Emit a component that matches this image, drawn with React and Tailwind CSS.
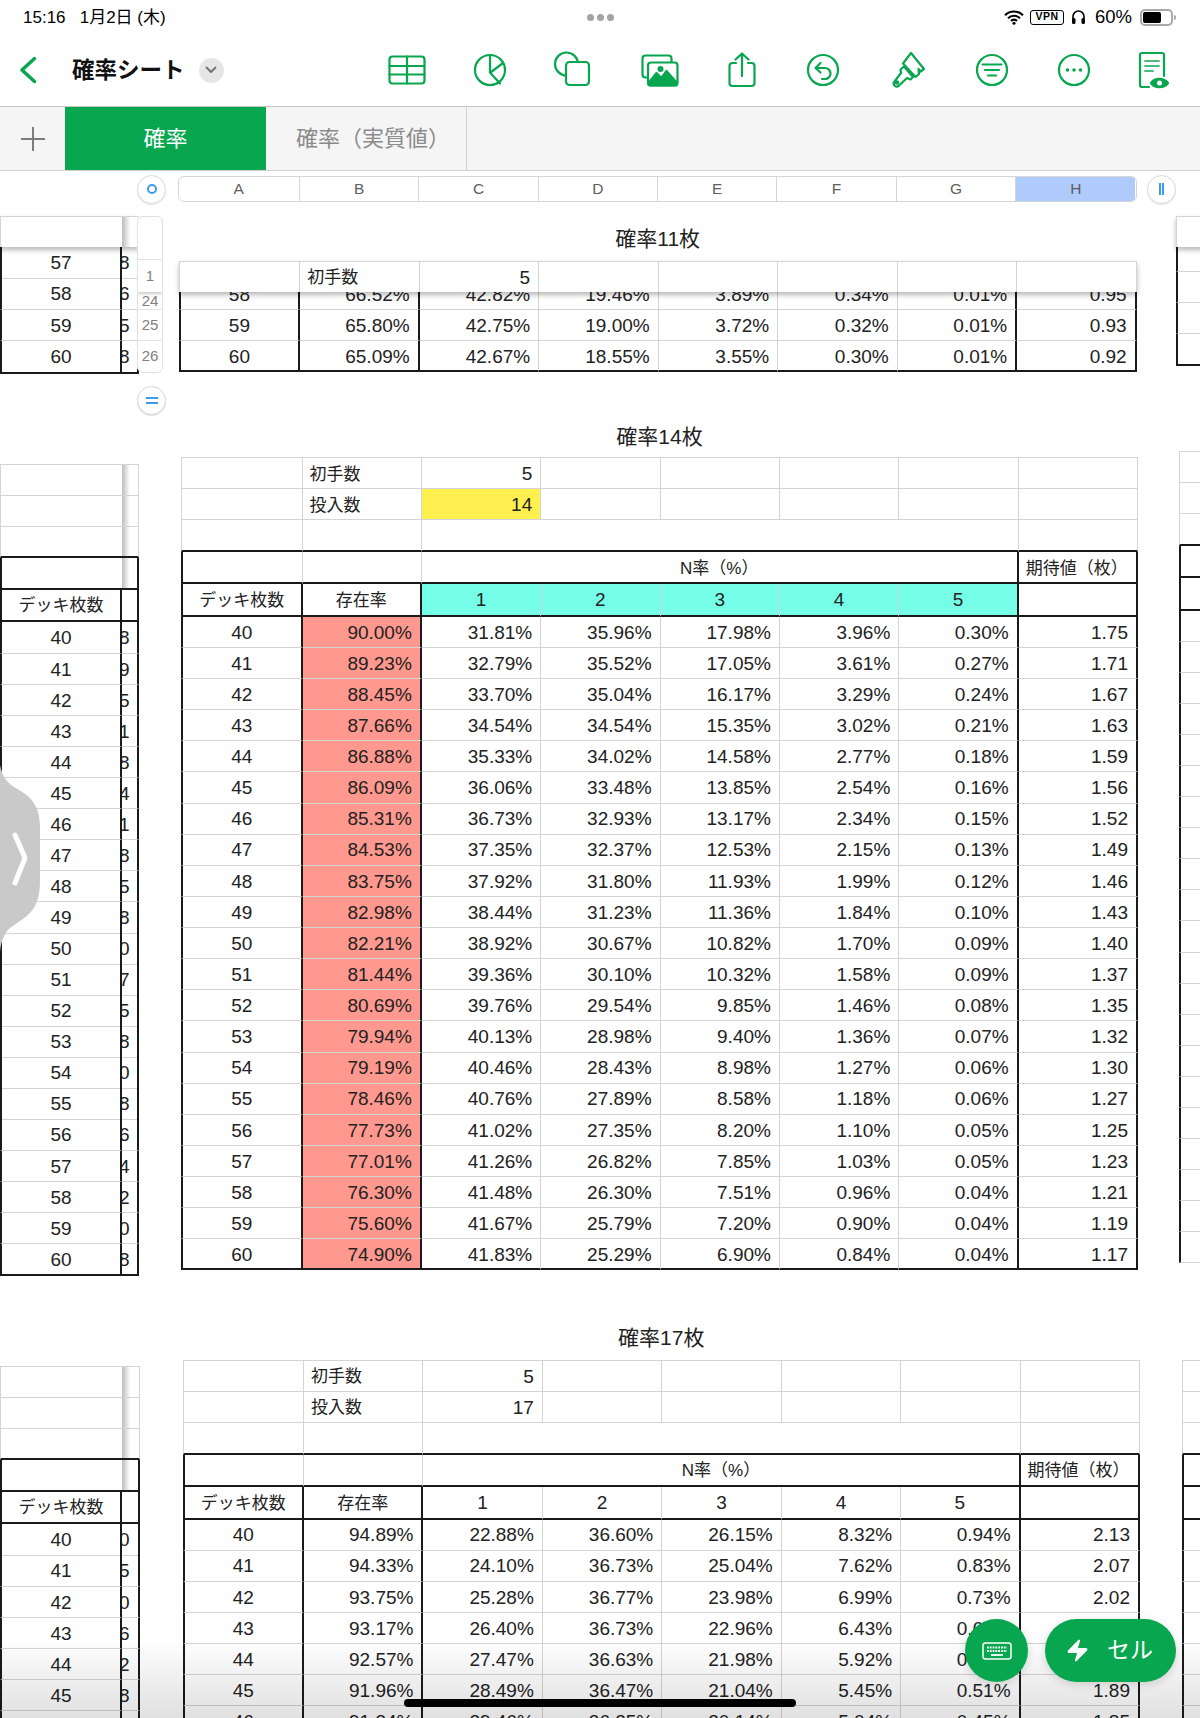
import React from "react";
import { Zap } from "lucide-react";

const G = "#07a64f";
const COLS = "grid-cols-[121.5px_repeat(7,1fr)]";

const T1 = [
  "58 66.52% 42.82% 19.46% 3.89% 0.34% 0.01% 0.95",
  "59 65.80% 42.75% 19.00% 3.72% 0.32% 0.01% 0.93",
  "60 65.09% 42.67% 18.55% 3.55% 0.30% 0.01% 0.92",
];
const T2 = `40 90.00% 31.81% 35.96% 17.98% 3.96% 0.30% 1.75
41 89.23% 32.79% 35.52% 17.05% 3.61% 0.27% 1.71
42 88.45% 33.70% 35.04% 16.17% 3.29% 0.24% 1.67
43 87.66% 34.54% 34.54% 15.35% 3.02% 0.21% 1.63
44 86.88% 35.33% 34.02% 14.58% 2.77% 0.18% 1.59
45 86.09% 36.06% 33.48% 13.85% 2.54% 0.16% 1.56
46 85.31% 36.73% 32.93% 13.17% 2.34% 0.15% 1.52
47 84.53% 37.35% 32.37% 12.53% 2.15% 0.13% 1.49
48 83.75% 37.92% 31.80% 11.93% 1.99% 0.12% 1.46
49 82.98% 38.44% 31.23% 11.36% 1.84% 0.10% 1.43
50 82.21% 38.92% 30.67% 10.82% 1.70% 0.09% 1.40
51 81.44% 39.36% 30.10% 10.32% 1.58% 0.09% 1.37
52 80.69% 39.76% 29.54% 9.85% 1.46% 0.08% 1.35
53 79.94% 40.13% 28.98% 9.40% 1.36% 0.07% 1.32
54 79.19% 40.46% 28.43% 8.98% 1.27% 0.06% 1.30
55 78.46% 40.76% 27.89% 8.58% 1.18% 0.06% 1.27
56 77.73% 41.02% 27.35% 8.20% 1.10% 0.05% 1.25
57 77.01% 41.26% 26.82% 7.85% 1.03% 0.05% 1.23
58 76.30% 41.48% 26.30% 7.51% 0.96% 0.04% 1.21
59 75.60% 41.67% 25.79% 7.20% 0.90% 0.04% 1.19
60 74.90% 41.83% 25.29% 6.90% 0.84% 0.04% 1.17`.split("\n");
const T3 = `40 94.89% 22.88% 36.60% 26.15% 8.32% 0.94% 2.13
41 94.33% 24.10% 36.73% 25.04% 7.62% 0.83% 2.07
42 93.75% 25.28% 36.77% 23.98% 6.99% 0.73% 2.02
43 93.17% 26.40% 36.73% 22.96% 6.43% 0.65% 1.97
44 92.57% 27.47% 36.63% 21.98% 5.92% 0.58% 1.93
45 91.96% 28.49% 36.47% 21.04% 5.45% 0.51% 1.89
46 91.34% 29.46% 36.25% 20.14% 5.04% 0.45% 1.85`.split("\n");

function Cell({ children, a = "r", r, b, l, bg = "", span = "", sm }) {
  return (
    <div
      className={`flex min-w-0 items-center overflow-hidden pt-[2px] ${
        a === "r" ? "justify-end pr-2" : a === "c" ? "justify-center" : "justify-start pl-[7px]"
      } ${r ? "border-r-2 border-r-[#1a1a1a]" : "border-r border-r-[#d4d4d4]"} ${
        b ? "border-b-2 border-b-[#1a1a1a]" : "border-b border-b-[#d4d4d4]"
      } ${l === "k" ? "border-l-2 border-l-[#1a1a1a]" : l === "g" ? "border-l border-l-[#d4d4d4]" : ""} ${bg} ${span} ${
        sm ? "text-[17px]" : "text-[19px]"
      }`}
    >
      {children}
    </div>
  );
}

function DataRow({ text, last, salmon }) {
  const c = text.split(" ");
  return (
    <div className={`grid h-[31.14px] ${COLS}`}>
      <Cell a="c" l="k" r b={last}>{c[0]}</Cell>
      <Cell r b={last} bg={salmon ? "bg-[#ff988e]" : ""}>{c[1]}</Cell>
      <Cell b={last}>{c[2]}</Cell>
      <Cell b={last}>{c[3]}</Cell>
      <Cell b={last}>{c[4]}</Cell>
      <Cell b={last}>{c[5]}</Cell>
      <Cell r b={last}>{c[6]}</Cell>
      <Cell r b={last}>{c[7]}</Cell>
    </div>
  );
}

function FullTable({ count, highlight, rows, cut }) {
  const cy = highlight ? "bg-[#76ffe8]" : "";
  return (
    <div className="w-full border-t border-t-[#d4d4d4]">
      <div className={`grid h-[31px] ${COLS}`}>
        <Cell l="g" />
        <Cell a="l" sm>初手数</Cell>
        <Cell>5</Cell>
        <Cell /><Cell /><Cell /><Cell /><Cell />
      </div>
      <div className={`grid h-[31px] ${COLS}`}>
        <Cell l="g" />
        <Cell a="l" sm>投入数</Cell>
        <Cell bg={highlight ? "bg-[#fff050]" : ""}>{count}</Cell>
        <Cell /><Cell /><Cell /><Cell /><Cell />
      </div>
      <div className={`grid h-[32px] ${COLS}`}>
        <Cell l="g" b />
        <Cell b />
        <Cell b span="col-span-5" />
        <Cell b />
      </div>
      <div className={`grid h-[32px] ${COLS}`}>
        <Cell l="k" b />
        <Cell b />
        <Cell a="c" r b sm span="col-span-5">N率（%）</Cell>
        <Cell a="l" r b sm>期待値（枚）</Cell>
      </div>
      <div className={`grid h-[32.5px] ${COLS}`}>
        <Cell a="c" l="k" r b sm>デッキ枚数</Cell>
        <Cell a="c" r b sm>存在率</Cell>
        <Cell a="c" b bg={cy}>1</Cell>
        <Cell a="c" b bg={cy}>2</Cell>
        <Cell a="c" b bg={cy}>3</Cell>
        <Cell a="c" b bg={cy}>4</Cell>
        <Cell a="c" r b bg={cy}>5</Cell>
        <Cell r b />
      </div>
      {rows.map((t, i) => (
        <DataRow key={i} text={t} salmon={highlight} last={!cut && i === rows.length - 1} />
      ))}
    </div>
  );
}

function LeftRow({ n, d, last, tall }) {
  return (
    <div className={`grid grid-cols-[122px_1fr] ${tall ? "h-[31.4px]" : "h-[31.07px]"}`}>
      <div
        className={`flex items-center justify-center border-l-2 border-l-[#1a1a1a] border-r-2 border-r-[#1a1a1a] pt-[2px] text-[19px] ${
          last ? "border-b-2 border-b-[#1a1a1a]" : "border-b border-b-[#d4d4d4]"
        }`}
      >
        {n}
      </div>
      <div
        className={`flex items-center overflow-hidden border-r-2 border-r-[#1a1a1a] pt-[2px] text-[19px] ${
          last ? "border-b-2 border-b-[#1a1a1a]" : "border-b border-b-[#d4d4d4]"
        }`}
      >
        <span className="-ml-[3px]">{d}</span>
      </div>
    </div>
  );
}

function LeftTop() {
  return (
    <div className="border-t border-t-[#d4d4d4]">
      {[0, 1, 2].map((i) => (
        <div key={i} className="grid h-[31px] grid-cols-[122px_1fr]">
          <div className={`border-l border-l-[#d4d4d4] ${i === 2 ? "border-b-2 border-b-[#1a1a1a]" : "border-b border-b-[#d4d4d4]"}`} />
          <div className={`border-r border-r-[#d4d4d4] bg-[linear-gradient(90deg,#bdbdbd,#ffffff_50%)] ${i === 2 ? "border-b-2 border-b-[#1a1a1a]" : "border-b border-b-[#d4d4d4]"}`} />
        </div>
      ))}
      <div className="grid h-[32.3px] grid-cols-[122px_1fr]">
        <div className="border-l-2 border-b-2 border-l-[#1a1a1a] border-b-[#1a1a1a]" />
        <div className="border-r-2 border-b-2 border-r-[#1a1a1a] border-b-[#1a1a1a] bg-[linear-gradient(90deg,#bdbdbd,#ffffff_50%)]" />
      </div>
      <div className="grid h-[32.6px] grid-cols-[122px_1fr]">
        <div className="flex items-center justify-center border-x-2 border-b-2 border-x-[#1a1a1a] border-b-[#1a1a1a] pt-[2px] text-[17px]">
          デッキ枚数
        </div>
        <div className="border-r-2 border-b-2 border-r-[#1a1a1a] border-b-[#1a1a1a]" />
      </div>
    </div>
  );
}

function RightPanel({ mt, ml, rows }) {
  return (
    <div className={`w-[60px] shrink-0 ${mt} ${ml} border-t border-t-[#d4d4d4]`}>
      <div className="h-[31px] border-b border-l border-b-[#d4d4d4] border-l-[#d4d4d4]" />
      <div className="h-[31px] border-b border-l border-b-[#d4d4d4] border-l-[#d4d4d4]" />
      <div className="h-[32px] border-b-2 border-l border-b-[#1a1a1a] border-l-[#d4d4d4]" />
      <div className="h-[32px] border-b-2 border-l-2 border-b-[#1a1a1a] border-l-[#1a1a1a]" />
      <div className="h-[32.5px] border-b-2 border-l-2 border-b-[#1a1a1a] border-l-[#1a1a1a]" />
      {Array.from({ length: rows }).map((_, i) => (
        <div key={i} className="h-[31.1px] border-b border-l-2 border-b-[#d4d4d4] border-l-[#1a1a1a]" />
      ))}
    </div>
  );
}

function Title({ children, mt }) {
  return <div className={`flex h-[30px] w-full items-center justify-center text-[21px] leading-none ${mt}`}>{children}</div>;
}

const S = { fill: "none", stroke: G, strokeWidth: 2.2, strokeLinecap: "round", strokeLinejoin: "round" };

function ToolIcons() {
  return (
    <div className="flex items-center">
      <svg viewBox="0 0 40 40" className="h-10 w-10 shrink-0" {...S}>
        <rect x="2.5" y="6.5" width="35" height="27" rx="3" />
        <path d="M2.5 16h35M2.5 24.500h35M20 6.500v27" />
      </svg>
      <svg viewBox="0 0 40 40" className="ml-[43.7px] h-10 w-10 shrink-0" {...S}>
        <circle cx="20" cy="20" r="15" />
        <path d="M20 5v17.500l10 11M20.500 22.500 33 13" />
      </svg>
      <svg viewBox="0 0 40 40" className="ml-[41.2px] h-10 w-10 shrink-0" {...S}>
        <circle cx="15.500" cy="14" r="11.500" />
        <rect x="15" y="12" width="23" height="23" rx="3.500" fill="#fff" />
      </svg>
      <svg viewBox="0 0 40 40" className="ml-[48.5px] h-10 w-10 shrink-0" {...S}>
        <path d="M7.500 27.500H5.500a3 3 0 0 1-3-3V8.500a3 3 0 0 1 3-3h23a3 3 0 0 1 3 3V13" />
        <rect x="8" y="12.500" width="29.500" height="23" rx="3" fill="#fff" />
        <path d="M8.500 33l8-10 5 5 5-7 10.500 12v1a1.500 1.500 0 0 1-1.500 1.500h-26A1.500 1.500 0 0 1 8.500 34Z" fill={G} stroke={G} />
        <circle cx="20.500" cy="19" r="3" fill={G} stroke="none" />
      </svg>
      <svg viewBox="0 0 40 40" className="ml-[41.7px] h-10 w-10 shrink-0" {...S}>
        <path d="M14 13H10.500a3 3 0 0 0-3 3v17a3 3 0 0 0 3 3h19a3 3 0 0 0 3-3V16a3 3 0 0 0-3-3H26" />
        <path d="M20 26V3.500M13.500 9.500 20 3.500l6.500 6" />
      </svg>
      <svg viewBox="0 0 40 40" className="ml-[41.8px] h-10 w-10 shrink-0" {...S}>
        <circle cx="20" cy="20" r="15" />
        <path d="M17.500 13 12.500 18l5 4.500M13 18h9a5.500 5.500 0 0 1 0 11h-3" />
      </svg>
      <svg viewBox="0 0 40 40" className="ml-[43.5px] h-10 w-10 shrink-0" {...S}>
        <path d="M24 3 37 19l-3.500 2.500-2-2.500 .5 5-3.500 3L16 13.500Z" />
        <path d="M17 16.500 26 27l-2.500 2.500-3.500-1.500-8 7.500a3 3 0 0 1-4.500-4l6.500-8.500-.5-3.500Z" />
        <circle cx="10" cy="32.500" r="1.200" />
      </svg>
      <svg viewBox="0 0 40 40" className="ml-[45.3px] h-10 w-10 shrink-0" {...S}>
        <circle cx="20" cy="20" r="15" />
        <path d="M10.500 14.500h19M13 20h14M16 25.500h8" />
      </svg>
      <svg viewBox="0 0 40 40" className="ml-[42.2px] h-10 w-10 shrink-0" {...S}>
        <circle cx="20" cy="20" r="15" />
        <circle cx="13.500" cy="20" r="1.800" fill={G} stroke="none" />
        <circle cx="20" cy="20" r="1.800" fill={G} stroke="none" />
        <circle cx="26.500" cy="20" r="1.800" fill={G} stroke="none" />
      </svg>
      <svg viewBox="0 0 40 40" className="ml-[37.5px] h-10 w-10 shrink-0" {...S}>
        <path d="M17 37H10a2 2 0 0 1-2-2V5a2 2 0 0 1 2-2h20a2 2 0 0 1 2 2v21" />
        <path d="M13 11h14M13 16h14M13 21h8" strokeWidth="1.700" />
        <path d="M19 33c3-5.500 13-5.500 17 0-4 5.500-14 5.500-17 0Z" fill={G} />
        <circle cx="27.500" cy="33" r="2.500" fill="#fff" stroke="none" />
      </svg>
    </div>
  );
}

const L2 = "8 9 5 1 8 4 1 8 5 8 0 7 5 8 0 8 6 4 2 0 8".split(" ");
const L3 = "0 5 0 6 2 8 5".split(" ");

export default function App() {
  return (
    <div className="relative h-[1718px] w-[1200px] overflow-hidden bg-white font-['Liberation_Sans','Noto_Sans_CJK_JP',sans-serif] text-[#222]">
      {/* status bar */}
      <div className="flex h-[34px] items-center text-black">
        <div className="w-[550px] whitespace-pre pl-[23px] pt-[1px] text-[17px]">15:16   1月2日 (木)</div>
        <div className="flex w-[100px] justify-center gap-[3px]">
          <span className="h-[7px] w-[7px] rounded-full bg-[#a3a3a3]" />
          <span className="h-[7px] w-[7px] rounded-full bg-[#a3a3a3]" />
          <span className="h-[7px] w-[7px] rounded-full bg-[#a3a3a3]" />
        </div>
        <div className="flex items-center pl-[354px]">
          <svg viewBox="0 0 20 15" className="h-[15px] w-[20px] shrink-0">
            <path d="M1 5.200a12.800 12.800 0 0 1 18 0M4 8.300a8.500 8.500 0 0 1 12 0M7 11a4 4 0 0 1 6 0" fill="none" stroke="#000" strokeWidth="2.100" />
            <circle cx="10" cy="13.300" r="1.500" />
          </svg>
          <span className="ml-[6px] flex h-[15px] w-[34px] items-center justify-center rounded-[3px] border border-black text-[10.5px] font-bold tracking-[0.5px]">VPN</span>
          <svg viewBox="0 0 15 16" className="ml-[7px] h-[16px] w-[15px] shrink-0">
            <path d="M2 10V7.500a5.500 5.500 0 0 1 11 0V10" fill="none" stroke="#000" strokeWidth="1.600" />
            <rect x="1" y="9" width="3.500" height="6" rx="1.500" />
            <rect x="10.500" y="9" width="3.500" height="6" rx="1.500" />
          </svg>
          <span className="ml-[9px] text-[18.5px] leading-none">60%</span>
          <span className="ml-[8px] flex h-[17px] w-[33px] items-center rounded-[5px] border-2 border-[#a8a8a8] pl-[1px]">
            <span className="h-[11px] w-[18px] rounded-[2px] bg-black" />
          </span>
          <span className="ml-[1px] h-[5px] w-[2px] rounded-r-sm bg-[#a8a8a8]" />
        </div>
      </div>

      {/* toolbar */}
      <div className="flex h-[73px] items-center border-b border-b-[#c6c6c6]">
        <div className="flex w-[386.6px] shrink-0 items-center">
          <svg viewBox="0 0 18 28" className="ml-[19px] h-[28px] w-[18px] shrink-0">
            <path d="M15.500 2.500 3 14l12.500 11.500" fill="none" stroke={G} strokeWidth="3.500" strokeLinecap="round" strokeLinejoin="round" />
          </svg>
          <div className="ml-[35px] whitespace-nowrap pt-[2px] text-[22.5px] font-bold leading-none text-[#111]">確率シート</div>
          <div className="ml-[14px] flex h-[25px] w-[25px] shrink-0 items-center justify-center rounded-full bg-[#e6e6e6]">
            <svg viewBox="0 0 12 8" className="h-[8px] w-[12px]">
              <path d="M1.500 1.500 6 6l4.500-4.500" fill="none" stroke="#707070" strokeWidth="1.800" strokeLinecap="round" strokeLinejoin="round" />
            </svg>
          </div>
        </div>
        <ToolIcons />
      </div>

      {/* tabs */}
      <div className="flex h-[64px] border-b border-b-[#d0d0d0] bg-[#f5f5f5]">
        <div className="flex w-[65px] items-center justify-center">
          <svg viewBox="0 0 26 26" className="h-[26px] w-[26px]">
            <path d="M13 1v24M1 13h24" stroke="#7c7c7c" strokeWidth="2" />
          </svg>
        </div>
        <div className="flex w-[201px] items-center justify-center bg-[#07a64f] text-[22px] text-white">確率</div>
        <div className="flex w-[201px] items-center border-r border-r-[#cfcfcf] pl-[30px] text-[22px] text-[#8b8b8b]">確率（実質値）</div>
      </div>

      {/* column header */}
      <div className="flex h-[32px] items-center pt-[4px]">
        <div className="ml-[137px] flex h-[29px] w-[29px] items-center justify-center rounded-full border border-[#d8d8d8] shadow-[0_1px_1px_rgba(0,0,0,0.12)]">
          <span className="h-[10px] w-[10px] rounded-full border-2 border-[#3c9ae8]" />
        </div>
        <div className={`ml-[11.5px] grid h-[26px] w-[959px] overflow-hidden rounded-[6px] border border-[#d6d6d6] text-[15.5px] text-[#5f5f5f] ${COLS}`}>
          {"ABCDEFG".split("").map((c) => (
            <div key={c} className="flex items-center justify-center border-r border-r-[#d6d6d6]">{c}</div>
          ))}
          <div className="flex items-center justify-center bg-[#aecbfb]">H</div>
        </div>
        <div className="ml-[10px] flex h-[29px] w-[29px] items-center justify-center rounded-full border border-[#d8d8d8] shadow-[0_1px_1px_rgba(0,0,0,0.12)]">
          <span className="h-[12px] w-[5px] border-x-2 border-x-[#3c9ae8]" />
        </div>
      </div>

      {/* section 1 */}
      <div className="flex h-[215px] items-start">
        <div className="mt-[13px] w-[138.5px] shrink-0">
          <div className="relative z-10 grid h-[31px] grid-cols-[122px_1fr] border-t border-t-[#d4d4d4] bg-white shadow-[0_3px_5px_rgba(0,0,0,0.28)]">
            <div className="border-l border-l-[#d4d4d4]" />
            <div className="bg-[linear-gradient(90deg,#bdbdbd,#ffffff_50%)]" />
          </div>
          <LeftRow tall n="57" d="8" />
          <LeftRow tall n="58" d="6" />
          <LeftRow tall n="59" d="5" />
          <LeftRow tall n="60" d="8" last />
        </div>
        <div className="ml-[40.2px] w-[958px] shrink-0">
          <Title mt="mt-[20px]">確率11枚</Title>
          <div className="mt-[7.7px]">
            <div className={`relative z-10 grid h-[31.5px] border-t border-t-[#d4d4d4] bg-white shadow-[0_3px_5px_rgba(0,0,0,0.28)] ${COLS}`}>
              <div className="border-x border-x-[#d4d4d4]" />
              <div className="flex items-center border-r border-r-[#d4d4d4] pl-[7px] pt-[2px] text-[17px]">初手数</div>
              <div className="flex items-center justify-end border-r border-r-[#d4d4d4] pr-2 pt-[2px] text-[19px]">5</div>
              <div className="border-r border-r-[#d4d4d4]" />
              <div className="border-r border-r-[#d4d4d4]" />
              <div className="border-r border-r-[#d4d4d4]" />
              <div className="border-r border-r-[#d4d4d4]" />
              <div className="border-r border-r-[#d4d4d4]" />
            </div>
            <div className="h-[18px] overflow-hidden">
              <div className="-mt-[13px]"><DataRow text={T1[0]} /></div>
            </div>
            <DataRow text={T1[1]} />
            <DataRow text={T1[2]} last />
          </div>
        </div>
        <div className="ml-[39px] mt-[13px] w-[60px] shrink-0">
          <div className="relative z-10 h-[31px] border-l border-t border-l-[#d4d4d4] border-t-[#d4d4d4] bg-white shadow-[0_3px_5px_rgba(0,0,0,0.28)]" />
          <div className="h-[25px] border-b border-l-2 border-b-[#d4d4d4] border-l-[#1a1a1a]" />
          <div className="h-[31px] border-b border-l-2 border-b-[#d4d4d4] border-l-[#1a1a1a]" />
          <div className="h-[31px] border-b border-l-2 border-b-[#d4d4d4] border-l-[#1a1a1a]" />
          <div className="h-[32px] border-b-2 border-l-2 border-b-[#1a1a1a] border-l-[#1a1a1a]" />
        </div>
      </div>

      {/* section 2 */}
      <div className="flex h-[900px] items-start">
        <div className="mt-[45.6px] w-[138.5px] shrink-0">
          <LeftTop />
          {T2.map((t, i) => (
            <LeftRow key={i} n={t.split(" ")[0]} d={L2[i]} last={i === 20} />
          ))}
        </div>
        <div className="ml-[42.5px] w-[957px] shrink-0">
          <Title mt="mt-[3px]">確率14枚</Title>
          <div className="mt-[6.3px]">
            <FullTable count="14" highlight rows={T2} />
          </div>
        </div>
        <RightPanel mt="mt-[33px]" ml="ml-[41px]" rows={21} />
      </div>

      {/* section 3 */}
      <div className="flex items-start">
        <div className="mt-[47.5px] w-[140px] shrink-0">
          <LeftTop />
          {T3.map((t, i) => (
            <LeftRow key={i} n={t.split(" ")[0]} d={L3[i]} />
          ))}
        </div>
        <div className="ml-[42.5px] w-[957.5px] shrink-0">
          <Title mt="mt-[4px]">確率17枚</Title>
          <div className="mt-[8px]">
            <FullTable count="17" rows={T3} cut />
          </div>
        </div>
        <RightPanel mt="mt-[42px]" ml="ml-[41.5px]" rows={7} />
      </div>

      {/* row number strip */}
      <div className="absolute left-[137px] top-[216px] z-20 flex h-[157px] w-[26px] flex-col overflow-hidden rounded-[6px] border border-[#e0e0e0] bg-white text-center text-[15px] text-[#808080]">
        <div className="h-[44px] border-b border-b-[#e4e4e4]" />
        <div className="flex h-[32px] items-center justify-center shadow-[0_2px_3px_rgba(0,0,0,0.2)]">1</div>
        <div className="flex h-[18px] items-end justify-center overflow-hidden border-b border-b-[#e4e4e4] leading-[17px]">24</div>
        <div className="flex h-[32px] items-center justify-center border-b border-b-[#e4e4e4]">25</div>
        <div className="flex h-[31px] items-center justify-center">26</div>
      </div>
      <div className="absolute left-[137px] top-[386px] z-20 flex h-[29px] w-[29px] items-center justify-center rounded-full border border-[#d8d8d8] bg-white shadow-[0_1px_1px_rgba(0,0,0,0.12)]">
        <span className="h-[7px] w-[12px] border-y-2 border-y-[#3c9ae8]" />
      </div>

      {/* side handle */}
      <svg viewBox="0 0 42 200" className="absolute left-0 top-[760px] z-20 h-[200px] w-[42px]">
        <path d="M0 5C2 15 6 22 14 27C24 33 34 38 38 52C40 60 40 66 40 72L40 120C40 130 39 138 35 146C30 156 18 162 10 168C4 173 1 182 0 192Z" fill="#c9c9c9" />
        <path d="M15 75 25 98 15 123" fill="none" stroke="#fff" strokeWidth="5" strokeLinecap="round" strokeLinejoin="round" />
      </svg>

      {/* bottom fade + home indicator */}
      <div className="pointer-events-none absolute inset-x-0 bottom-0 z-20 h-[80px] bg-gradient-to-b from-transparent to-[#0000001f]" />
      <div className="absolute left-[404px] top-[1699px] z-30 h-[8px] w-[392px] rounded-full bg-black" />

      {/* action buttons */}
      <div className="absolute left-[965px] top-[1619px] z-30 flex h-[63px] w-[63px] items-center justify-center rounded-full bg-[#07a64f] shadow-[0_2px_10px_rgba(0,0,0,0.15)]">
        <svg viewBox="0 0 30 18" className="h-[18px] w-[30px]" fill="none">
          <rect x="1" y="1" width="28" height="16" rx="2.500" stroke="#fff" strokeWidth="1.500" />
          <path d="M5 5.500h20M5 9h20" stroke="#fff" strokeWidth="1.800" strokeDasharray="1.800 1" />
          <path d="M9 13h12" stroke="#fff" strokeWidth="1.800" />
        </svg>
      </div>
      <div className="absolute left-[1045px] top-[1619px] z-30 flex h-[63px] w-[131px] items-center rounded-full bg-[#07a64f] pl-[20px] text-[23px] text-white shadow-[0_2px_10px_rgba(0,0,0,0.15)]">
        <Zap className="h-[27px] w-[25px]" fill="#fff" stroke="#fff" strokeWidth={1} />
        <span className="ml-[17px]">セル</span>
      </div>
    </div>
  );
}
